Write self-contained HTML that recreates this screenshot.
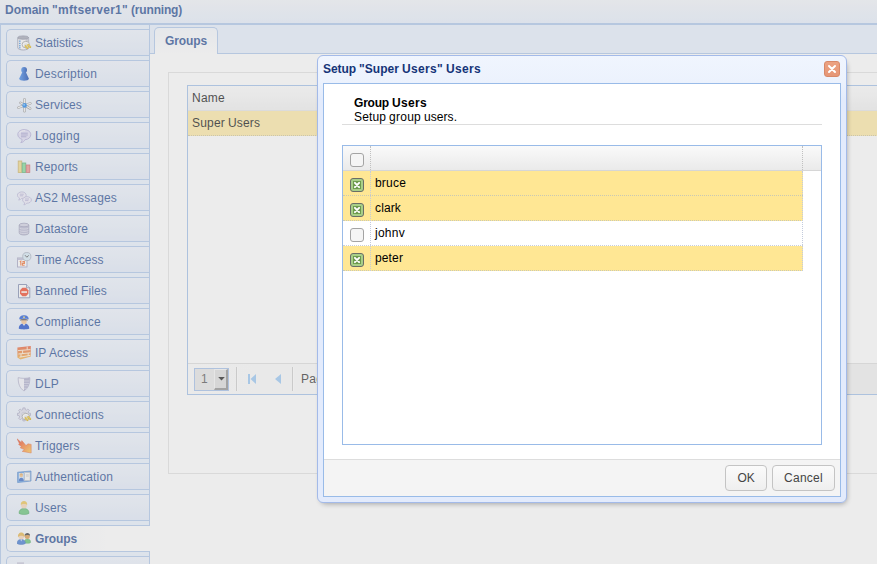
<!DOCTYPE html>
<html>
<head>
<meta charset="utf-8">
<title>Domain "mftserver1" (running)</title>
<style>
html,body{margin:0;padding:0;}
html{overflow:hidden;width:877px;height:564px;}
body{width:877px;height:564px;overflow:hidden;position:relative;background:#fff;font-family:"Liberation Sans",Arial,Helvetica,sans-serif;font-size:12px;color:#000;}
div,span{box-sizing:border-box;}
i{font-style:normal;}
.abs{position:absolute;}
/* header */
#hdr{position:absolute;left:0;top:0;width:877px;height:24px;background:linear-gradient(#f2f5fb,#e5eefc);border-bottom:1px solid #a8c3ea;}
#hdr span{position:absolute;left:5px;top:3px;font-weight:bold;font-size:12px;line-height:14px;color:#15428b;white-space:nowrap;}
/* left strip */
#left{position:absolute;left:0;top:24px;width:150px;height:540px;background:#e7f0fd;border-left:1px solid #a8c3ea;border-right:1px solid #a8c3ea;border-top:1px solid #a8c3ea;}
.lt{position:absolute;left:5px;width:143px;height:27px;border:1px solid #a8c3ea;border-right:none;border-radius:5px 0 0 5px;background:linear-gradient(#edf3fd,#e1eafa);}
.lt span{position:absolute;left:28px;top:6px;line-height:14px;font-size:12px;color:#15428b;white-space:nowrap;}
.lt svg{position:absolute;left:10px;top:5px;width:16px;height:16px;}
.lt.act{background:linear-gradient(90deg,#f1f5fc,#ffffff 70%);width:144px;}
.lt.act span{font-weight:bold;color:#15428b;}
/* main */
#main{position:absolute;left:150px;top:24px;width:727px;height:540px;background:#fff;}
#strip{position:absolute;left:0;top:0;width:727px;height:30px;background:#e5effe;border-top:1px solid #a8c3ea;border-bottom:1px solid #a8c3ea;}
#tab{position:absolute;left:4px;top:2px;width:64px;height:27px;border:1px solid #a8c3ea;border-bottom:none;border-radius:5px 5px 0 0;background:linear-gradient(#f3f7fd,#ffffff);}
#tab span{position:absolute;left:10px;top:6px;font-weight:bold;font-size:12px;line-height:14px;color:#15428b;}
#fs{position:absolute;left:18px;top:48px;width:720px;height:402px;border:1px solid #e0e0e0;background:#fff;}
#grid{position:absolute;left:37px;top:61px;width:700px;height:310px;border:1px solid #99bbe8;background:#fff;}
#ghd{position:absolute;left:0;top:0;width:698px;height:25px;background:linear-gradient(#fdfdfd,#f0f0f0);border-bottom:1px solid #e4e4e4;}
#ghd span{position:absolute;left:4px;top:5px;line-height:14px;}
#grow{position:absolute;left:0;top:25px;width:698px;height:25px;background:#ffe99e;border-bottom:1px dotted #c9c19a;}
#grow span{position:absolute;left:4px;top:5px;line-height:14px;}
#gtb{position:absolute;left:0;top:277px;width:698px;height:31px;border-top:1px solid #dcdcdc;background:linear-gradient(90deg,#fcfcfc 0%,#fafafa 20%,#f1f1f1 90%);}
/* mask */
#mask{position:absolute;left:0;top:0;width:877px;height:564px;background:rgba(204,204,204,0.38);}
/* dialog */
#shadow{position:absolute;left:321px;top:62px;width:525px;height:441px;border-radius:5px;box-shadow:0 0 5px 1px rgba(0,0,0,0.3);}
#dlg{position:absolute;left:317px;top:55px;width:530px;height:448px;border:1px solid #a3bae9;border-radius:6px;background:linear-gradient(#f0f5fe 0px,#ecf2fd 26px,#e3ebfc 44px);}
#dtitle{position:absolute;left:5px;top:6px;font-weight:bold;font-size:12px;line-height:14px;color:#153478;white-space:nowrap;}
#dclose{position:absolute;left:506px;top:5px;width:16px;height:16px;border-radius:3px;background:linear-gradient(#eca282,#e69676);border:1px solid #d88868;}
#dbody{position:absolute;left:5px;top:27px;width:518px;height:414px;border:1px solid #99bbe8;background:#fff;}
#dfoot{position:absolute;left:0;top:375px;width:516px;height:37px;border-top:1px solid #ddd;background:#f4f4f4;}
.btn{position:absolute;top:5px;height:26px;border:1px solid #c4c4c4;border-radius:4px;background:linear-gradient(#fbfbfb,#efefef);color:#444;font-size:12px;line-height:24px;text-align:center;}
#ug{position:absolute;left:18px;top:61px;width:480px;height:300px;border:1px solid #99bbe8;background:#fff;}
#uhd{position:absolute;left:0;top:0;width:478px;height:25px;background:linear-gradient(#fafafa,#eaeaea);border-bottom:1px solid #d6d6d6;}
.ur{position:absolute;left:0;width:460px;height:25px;border-bottom:1px dotted #c8cfdc;}
.ur.sel{background:#ffe794;border-bottom:1px dotted #c9c9b4;}
.ur span{position:absolute;left:32px;top:5px;line-height:14px;font-size:12px;color:#000;}
.cb{position:absolute;left:7px;width:14px;height:14px;border:1px solid #a4a4a4;border-radius:3px;background:#f5f5f5;}
.cb.on{background:#a8cf88;border-color:#6a6e66;}
.cb.on svg{position:absolute;left:-1px;top:-1px;width:14px;height:14px;}
</style>
</head>
<body>
<div id="hdr"><span>Domain<i style="letter-spacing:-0.33px"> </i><i style="letter-spacing:0.27px">&quot;mftserver1&quot;</i><i style="letter-spacing:-0.33px"> </i><i style="letter-spacing:-0.18px">(running)</i></span></div>
<div id="left">
<div class="lt" style="top:4px"><svg viewBox="0 0 16 16"><path d="M.8 2.6 V12.8 C.8 14 3.2 15 6.2 15 S11.6 14 11.6 12.8 V2.6 Z" fill="#f8f8fb" stroke="#9092a8" stroke-width=".9"/><path d="M8.6 3 H11.4 V13 L8.6 14.4 Z" fill="#c8cad6"/><ellipse cx="6.2" cy="2.6" rx="5.4" ry="1.7" fill="#9ea2b2" stroke="#80849a" stroke-width=".8"/><g fill="#3f8fe0"><rect x="2" y="5.5" width="1.6" height="1.3"/><rect x="2" y="7.8" width="1.6" height="1.3"/><rect x="2" y="10.1" width="1.6" height="1.3"/><rect x="2" y="12.2" width="1.6" height="1.2"/></g><ellipse cx="8.8" cy="9.6" rx="3.7" ry="3.3" fill="#fdfdfd" stroke="#9c9c9c" stroke-width=".9"/><ellipse cx="9" cy="9.9" rx="2" ry="1.7" fill="#e2e2e2"/><path d="M8.6 11.2 l1.9 1.9 M11.2 10 l2 2" stroke="#d8a800" stroke-width="2.1" stroke-linecap="round"/><path d="M8.6 11 l1.7 1.7 M11.2 9.8 l1.8 1.8" stroke="#f8e060" stroke-width=".8" stroke-linecap="round"/></svg><span>Statistics</span></div>
<div class="lt" style="top:35px"><svg viewBox="0 0 16 16"><defs><linearGradient id="g1" x1="0" x2="1"><stop offset="0" stop-color="#3c86ec"/><stop offset="1" stop-color="#0038a8"/></linearGradient></defs><path d="M5.4 6 L2.2 12.6 C2 14 4.5 14.8 7 14.8 S12 14 11.8 12.6 L8.8 6 Z" fill="url(#g1)"/><circle cx="7.1" cy="3.9" r="2.9" fill="url(#g1)"/></svg><span><i style="letter-spacing:0.18px">Description</i></span></div>
<div class="lt" style="top:66px"><svg viewBox="0 0 16 16"><g stroke="#8f8f8f" stroke-width="2.4" stroke-linecap="round"><path d="M7.5 2.2 V14.2"/><path d="M1.4 10.6 L13.4 6.4"/><path d="M3.4 5.8 L13.2 11.6"/></g><g stroke="#f4f4f4" stroke-width="1.2" stroke-linecap="round"><path d="M7.5 2.2 V14.2"/><path d="M1.4 10.6 L13.4 6.4"/><path d="M3.4 5.8 L13.2 11.6"/></g><circle cx="7.6" cy="8.4" r="2.3" fill="#0a78e8"/><circle cx="7.1" cy="7.8" r=".9" fill="#7cc4ff"/></svg><span><i style="letter-spacing:0.12px">Services</i></span></div>
<div class="lt" style="top:97px"><svg viewBox="0 0 16 16"><path d="M7.2 1.6 C3.4 1.6 0.8 3.8 0.8 6.6 C0.8 8.8 2.6 10.6 5 11.3 C5.2 12.6 4.6 13.8 3.8 14.6 C5.8 14.4 7.4 13.2 8 11.7 C11.4 11.5 13.8 9.4 13.8 6.6 C13.8 3.8 11 1.6 7.2 1.6 Z" fill="#dddaf4" stroke="#a8a4d4" stroke-width=".9"/><path d="M2.2 5.4 C3 3.4 5.6 2.6 8 2.8" stroke="#f6f5fd" stroke-width="1" fill="none"/><g stroke="#9894c8" stroke-width=".9"><path d="M4 5.2 H10.8"/><path d="M4 7 H10.8"/><path d="M4 8.8 H9.4"/></g></svg><span><i style="letter-spacing:0.33px">Logging</i></span></div>
<div class="lt" style="top:128px"><svg viewBox="0 0 16 16"><rect x="1.2" y="2" width="3.6" height="11.5" fill="#f0d880" stroke="#c8a850" stroke-width=".8"/><rect x="5.2" y="4" width="3.6" height="9.5" fill="#78d890" stroke="#48a868" stroke-width=".8"/><rect x="9.2" y="6" width="3.6" height="7.5" fill="#f08888" stroke="#c85858" stroke-width=".8"/></svg><span><i style="letter-spacing:0.14px">Reports</i></span></div>
<div class="lt" style="top:159px"><svg viewBox="0 0 16 16"><path d="M4.8 1.9000000000000004 c-2.6 0 -4.4 1.5 -4.4 3.3 c0 1.2 .9 2.2 2.1 2.8 c0 .9 -.4 1.6 -.9 2.1 c1.3 -.1 2.4 -.8 2.9 -1.7 c2.7 .1 4.7 -1.4 4.7 -3.2 c0 -1.8 -1.8 -3.3 -4.4 -3.3 Z" fill="#eceaf8" stroke="#b0acd4" stroke-width=".8"/><path d="M2.8 4.2 h4 M2.8 5.8 h3.4" stroke="#aaa6d0" stroke-width=".8"/><path d="M10 6.7 c-2.6 0 -4.4 1.5 -4.4 3.3 c0 1.2 .9 2.2 2.1 2.8 c0 .9 -.4 1.6 -.9 2.1 c1.3 -.1 2.4 -.8 2.9 -1.7 c2.7 .1 4.7 -1.4 4.7 -3.2 c0 -1.8 -1.8 -3.3 -4.4 -3.3 Z" fill="#eceaf8" stroke="#b0acd4" stroke-width=".8"/><path d="M8 9 h4 M8 10.6 h3.4" stroke="#aaa6d0" stroke-width=".8"/></svg><span><i style="letter-spacing:0.11px">AS2</i><i style="letter-spacing:-0.33px"> </i><i style="letter-spacing:0.16px">Messages</i></span></div>
<div class="lt" style="top:190px"><svg viewBox="0 0 16 16"><path d="M2.2 4 V12 C2.2 13.2 4.4 14 7 14 S11.8 13.2 11.8 12 V4 Z" fill="#b4b4d0" stroke="#9494b4" stroke-width=".8"/><ellipse cx="7" cy="4" rx="4.8" ry="1.8" fill="#d0d0e4" stroke="#9494b4" stroke-width=".8"/><g stroke="#d8d8ea" stroke-width=".9" fill="none"><path d="M2.6 7.2 C4 8.3 10 8.3 11.4 7.2"/><path d="M2.6 9.6 C4 10.7 10 10.7 11.4 9.6"/><path d="M2.6 11.8 C4 12.9 10 12.9 11.4 11.8"/></g></svg><span><i style="letter-spacing:0.11px">Datastore</i></span></div>
<div class="lt" style="top:221px"><svg viewBox="0 0 16 16"><rect x=".5" y="6" width="9.5" height="9" fill="#fcfcfe" stroke="#9a9abc" stroke-width=".9"/><rect x=".5" y="6" width="9.5" height="2" fill="#b8b8d4"/><path d="M2.8 10 l1 -.8 v4.2 M5.4 9.6 h2 v1.8 h-2 v1.8 h2.2" stroke="#f06828" stroke-width="1.1" fill="none"/><circle cx="9.8" cy="4.6" r="4.1" fill="#d4e8f6" stroke="#a4acbc" stroke-width=".9"/><path d="M8 3.2 L9.8 5.2 L11.8 3.4" stroke="#444" stroke-width=".9" fill="none"/></svg><span><i style="letter-spacing:0.08px">Time</i><i style="letter-spacing:-0.33px"> </i><i style="letter-spacing:0.05px">Access</i></span></div>
<div class="lt" style="top:252px"><svg viewBox="0 0 16 16"><path d="M1.5 1.5 H9.5 L12.8 4.8 V14.8 H1.5 Z" fill="#fcfcfe" stroke="#6c7aa4" stroke-width=".9"/><path d="M9.5 1.5 V4.8 H12.8" fill="#e4e8f0" stroke="#6c7aa4" stroke-width=".8"/><path d="M5.4 4.8 H9 L11.4 7.2 V10.8 L9 13.2 H5.4 L3 10.8 V7.2 Z" fill="#f03a1c"/><rect x="4.4" y="8.2" width="5.6" height="1.7" fill="#fff0ea"/></svg><span><i style="letter-spacing:0.27px">Banned</i><i style="letter-spacing:-0.33px"> </i><i style="letter-spacing:0.13px">Files</i></span></div>
<div class="lt" style="top:283px"><svg viewBox="0 0 16 16"><path d="M1.8 14.8 C1.6 11.4 3.6 9.4 7 9.4 S12.4 11.4 12.2 14.8 C10 15.6 4 15.6 1.8 14.8 Z" fill="#0a40c8"/><path d="M5.6 10 L7 12 L8.4 10 Z" fill="#dfe8fa"/><circle cx="7" cy="7.6" r="2.7" fill="#f4c08c"/><path d="M2.4 5.4 C2 2.6 4.4 1.2 7 1.2 S12 2.6 11.6 5.4 C10 4.6 4 4.6 2.4 5.4 Z" fill="#1450d8"/><path d="M3.2 5.6 C5 5 9 5 10.8 5.6 V6.5 C9 6 5 6 3.2 6.5 Z" fill="#20202c"/><circle cx="7" cy="3.2" r=".9" fill="#f4d860"/></svg><span><i style="letter-spacing:0.26px">Compliance</i></span></div>
<div class="lt" style="top:314px"><svg viewBox="0 0 16 16"><defs><linearGradient id="g10" x1="0" y1="0" x2="0" y2="1"><stop offset="0" stop-color="#e8522c"/><stop offset="1" stop-color="#f4b03c"/></linearGradient></defs><path d="M.4 2.4 L13.8 1 V11.6 L3.4 14.6 L.4 12.6 Z" fill="url(#g10)"/><g stroke="#fff4e0" stroke-width=".9" fill="none"><path d="M1 5.6 L13.4 4.6"/><path d="M1.4 9 L13.4 7.8"/><path d="M2.4 12.2 L13.4 10.4"/><path d="M10.2 1.6 V4.8"/><path d="M5.6 5.4 V8.6"/><path d="M11.2 8 V10.8"/><path d="M4 9 V12"/></g></svg><span><i style="letter-spacing:-0.17px">IP</i><i style="letter-spacing:-0.33px"> </i><i style="letter-spacing:0.05px">Access</i></span></div>
<div class="lt" style="top:345px"><svg viewBox="0 0 16 16"><path d="M1.2 1.6 C4 2.6 10 2.6 12.8 1.6 C13 8 11 12.4 7 15 C3 12.4 1 8 1.2 1.6 Z" fill="#f2f2fa" stroke="#a4a4c4" stroke-width=".8"/><path d="M7 2.4 C9 2.4 11.4 2.2 12.8 1.6 C13 8 11 12.4 7 15 Z" fill="#a6a6c8"/><g stroke="#d4d4e8" stroke-width=".9"><path d="M7 5 H12.4"/><path d="M7 7.4 H12"/><path d="M7 9.8 H11"/><path d="M7 12.2 H9.6"/></g></svg><span><i style="letter-spacing:0.22px">DLP</i></span></div>
<div class="lt" style="top:376px"><svg viewBox="0 0 16 16"><path d="M13.50 6.27 L13.50 8.53 L11.86 8.57 L11.26 10.01 L12.40 11.20 L10.80 12.80 L9.61 11.66 L8.17 12.26 L8.13 13.90 L5.87 13.90 L5.83 12.26 L4.39 11.66 L3.20 12.80 L1.60 11.20 L2.74 10.01 L2.14 8.57 L0.50 8.53 L0.50 6.27 L2.14 6.23 L2.74 4.79 L1.60 3.60 L3.20 2.00 L4.39 3.14 L5.83 2.54 L5.87 0.90 L8.13 0.90 L8.17 2.54 L9.61 3.14 L10.80 2.00 L12.40 3.60 L11.26 4.79 L11.86 6.23 Z" fill="#dcdcea" stroke="#a2a2c2" stroke-width=".8" stroke-linejoin="round"/><circle cx="7" cy="7.4" r="2.2" fill="#fbfbfe" stroke="#b0b0cc" stroke-width=".7"/><ellipse cx="8.8" cy="9.6" rx="3.7" ry="3.3" fill="#fdfdfd" stroke="#9c9c9c" stroke-width=".9"/><ellipse cx="9" cy="9.9" rx="2" ry="1.7" fill="#e2e2e2"/><path d="M8.6 11.2 l1.9 1.9 M11.2 10 l2 2" stroke="#d8a800" stroke-width="2.1" stroke-linecap="round"/><path d="M8.6 11 l1.7 1.7 M11.2 9.8 l1.8 1.8" stroke="#f8e060" stroke-width=".8" stroke-linecap="round"/></svg><span><i style="letter-spacing:0.21px">Connections</i></span></div>
<div class="lt" style="top:407px"><svg viewBox="0 0 16 16"><defs><linearGradient id="g13" x1="0" y1="0" x2="1" y2="1"><stop offset="0" stop-color="#d82010"/><stop offset=".45" stop-color="#f87028"/><stop offset="1" stop-color="#ffc840"/></linearGradient></defs><path d="M0 .8 L4.2 4.4 L4.8 2.6 L9 7.6 L11 5.8 L14.2 6.4 V15 L5.2 13.4 L7.4 11.6 L3.2 9.8 L4.4 8.4 L1.6 6.4 L2.4 5.4 Z" fill="url(#g13)" stroke="#e05020" stroke-width=".5"/></svg><span><i style="letter-spacing:0.12px">Triggers</i></span></div>
<div class="lt" style="top:438px"><svg viewBox="0 0 16 16"><path d="M.6 3.2 L14 2 V12 L.6 13.6 Z" fill="#5a9ae4" stroke="#3c78c8" stroke-width=".7"/><rect x="7.6" y="3.6" width="5.4" height="7.8" fill="#f4f4f4" stroke="#c0c0c0" stroke-width=".6"/><rect x="9" y="5" width="2.8" height="3" fill="#dcdcdc"/><rect x="1.8" y="4" width="5" height="8" fill="#cfe2f8"/><circle cx="4.3" cy="6.4" r="1.7" fill="#f0b878"/><path d="M1.8 12 C1.8 9.6 3 8.8 4.3 8.8 S6.8 9.6 6.8 12 Z" fill="#2c62c4"/><path d="M2.6 5.6 C3 4.2 5.6 4.2 6 5.6 Z" fill="#d89030"/></svg><span><i style="letter-spacing:0.14px">Authentication</i></span></div>
<div class="lt" style="top:469px"><svg viewBox="0 0 16 16"><path d="M2 13.4 C2 10 4 8.6 7 8.6 S12 10 12 13.4 C10 14.8 4 14.8 2 13.4 Z" fill="#5cc070" stroke="#3c9c54" stroke-width=".6"/><circle cx="7" cy="5.4" r="2.9" fill="#f6d4b4"/><path d="M3.8 5.2 C3.4 2.4 5.2 1 7 1 S10.6 2.4 10.2 5.2 C9.4 3.6 4.6 3.6 3.8 5.2 Z" fill="#ecc048"/></svg><span><i style="letter-spacing:0.13px">Users</i></span></div>
<div class="lt act" style="top:500px"><svg viewBox="0 0 16 16"><path d="M7.4 11.4 C7.4 9 8.6 8 10.4 8 S13.6 9 13.6 11.4 C12.4 12.6 8.6 12.6 7.4 11.4 Z" fill="#58c068" stroke="#3c9c54" stroke-width=".5"/><circle cx="10.3" cy="5.6" r="2.5" fill="#d89440"/><path d="M7.6 5.2 C7.4 2.8 9 2 10.4 2 S13.2 2.8 13 5 C12.2 3.8 8.6 3.8 7.6 5.2 Z" fill="#2c2c2c"/><path d="M0 12.4 C0 9.6 1.6 8.4 4.2 8.4 S8.4 9.6 8.4 12.4 C6.8 13.8 1.6 13.8 0 12.4 Z" fill="#3470d0" stroke="#2458b0" stroke-width=".5"/><path d="M3.4 8.6 L4.2 10.4 L5 8.6 Z" fill="#e8f0fc"/><circle cx="4.3" cy="5.6" r="2.7" fill="#f6d0b0"/><path d="M1 6.4 C.6 3 2.6 1.6 4.3 1.6 S8 3 7.6 6.4 C7 4.2 1.6 4.2 1 6.4 Z" fill="#e4b040"/></svg><span><i style="letter-spacing:-0.11px">Groups</i></span></div>
<div class="lt" style="top:531px"><svg viewBox="0 0 16 16"><rect x="0" y=".3" width="7" height="3" fill="#c4c4d8"/></svg></div>
</div>
<div id="main">
  <div id="strip"><div id="tab"><span><i style="letter-spacing:-0.11px">Groups</i></span></div></div>
  <div id="fs"></div>
  <div id="grid">
    <div id="ghd"><span><i style="letter-spacing:0.25px">Name</i></span></div>
    <div id="grow"><span><i style="letter-spacing:0.20px">Super</i><i style="letter-spacing:-0.33px"> </i><i style="letter-spacing:0.13px">Users</i></span></div>
    <div id="gtb">
      <div class="abs" style="left:6px;top:4px;width:35px;height:23px;border:1px solid #9dbce8;background:#e6e6e6;"></div>
      <div class="abs" style="left:13px;top:8px;line-height:14px;color:#4a4a4a;">1</div>
      <div class="abs" style="left:26px;top:5px;width:14px;height:21px;background:#dcdcdc;border-top:1px solid #f6f6f6;border-left:1px solid #f6f6f6;border-right:2px solid #8a8a8a;border-bottom:2px solid #8a8a8a;"></div>
      <svg class="abs" style="left:30px;top:13px" width="7" height="4" viewBox="0 0 7 4"><path d="M.2 0 H6.8 L3.5 3.6 Z" fill="#111"/></svg>
      <div class="abs" style="left:48px;top:3px;width:1px;height:24px;background:#c8c8c8;"></div>
      <div class="abs" style="left:49px;top:3px;width:1px;height:24px;background:#fff;"></div>
      <svg class="abs" style="left:60px;top:10px" width="8" height="10" viewBox="0 0 8 10"><rect x="0" y="0" width="2" height="10" fill="#92c4f4"/><path d="M8 0 V10 L2.5 5 Z" fill="#92c4f4"/></svg>
      <svg class="abs" style="left:87px;top:10px" width="6" height="10" viewBox="0 0 6 10"><path d="M6 0 V10 L0 5 Z" fill="#92c4f4"/></svg>
      <div class="abs" style="left:104px;top:3px;width:1px;height:24px;background:#c8c8c8;"></div>
      <div class="abs" style="left:105px;top:3px;width:1px;height:24px;background:#fff;"></div>
      <div class="abs" style="left:113px;top:8px;line-height:14px;color:#222;white-space:nowrap;"><i style="letter-spacing:0.24px">Page</i></div>
    </div>
  </div>
</div>
<div id="mask"></div>
<div id="shadow"></div>
<div id="dlg">
  <div id="dtitle"><i style="letter-spacing:-0.07px">Setup</i><i style="letter-spacing:-0.33px"> </i><i style="letter-spacing:0.05px">&quot;Super</i><i style="letter-spacing:-0.33px"> </i><i style="letter-spacing:0.33px">Users&quot;</i><i style="letter-spacing:-0.33px"> </i><i style="letter-spacing:0.33px">Users</i></div>
  <div id="dclose"><svg viewBox="0 0 16 16" width="16" height="16" style="position:absolute;left:-1px;top:-1px"><path d="M5 5 L11 11 M11 5 L5 11" stroke="#fff" stroke-width="2" stroke-linecap="round" fill="none"/></svg></div>
  <div id="dbody">
    <div class="abs" style="left:30px;top:12px;font-weight:bold;line-height:14px;"><i style="letter-spacing:-0.20px">Group</i><i style="letter-spacing:-0.33px"> </i><i style="letter-spacing:0.33px">Users</i></div>
    <div class="abs" style="left:30px;top:26px;line-height:14px;"><i style="letter-spacing:0.13px">Setup</i><i style="letter-spacing:-0.33px"> </i><i style="letter-spacing:0.26px">group</i><i style="letter-spacing:-0.33px"> </i><i style="letter-spacing:0.05px">users.</i></div>
    <div class="abs" style="left:18px;top:40px;width:480px;height:1px;background:#ddd;"></div>
    <div id="ug">
      <div id="uhd"><div class="cb" style="top:7px"></div></div>
      <div class="ur sel" style="top:25px"><div class="cb on" style="top:7px"><svg viewBox="0 0 14 14"><rect x="3" y="3" width="8" height="8" fill="#6c9a4c"/><path d="M4.9 4.9 L9.1 9.1 M9.1 4.9 L4.9 9.1" stroke="#fff" stroke-width="2" stroke-linecap="round" fill="none"/></svg></div><span><i style="letter-spacing:0.20px">bruce</i></span></div>
      <div class="ur sel" style="top:50px"><div class="cb on" style="top:7px"><svg viewBox="0 0 14 14"><rect x="3" y="3" width="8" height="8" fill="#6c9a4c"/><path d="M4.9 4.9 L9.1 9.1 M9.1 4.9 L4.9 9.1" stroke="#fff" stroke-width="2" stroke-linecap="round" fill="none"/></svg></div><span><i style="letter-spacing:0.13px">clark</i></span></div>
      <div class="ur" style="top:75px"><div class="cb" style="top:7px"></div><span><i style="letter-spacing:0.26px">johnv</i></span></div>
      <div class="ur sel" style="top:100px"><div class="cb on" style="top:7px"><svg viewBox="0 0 14 14"><rect x="3" y="3" width="8" height="8" fill="#6c9a4c"/><path d="M4.9 4.9 L9.1 9.1 M9.1 4.9 L4.9 9.1" stroke="#fff" stroke-width="2" stroke-linecap="round" fill="none"/></svg></div><span><i style="letter-spacing:0.13px">peter</i></span></div>
    </div>
    <div class="abs" style="left:46px;top:87px;width:0;height:100px;border-left:1px dotted #c3cbdc;"></div>
    <div class="abs" style="left:478px;top:87px;width:0;height:100px;border-left:1px dotted #c3cbdc;"></div>
    <div class="abs" style="left:46px;top:62px;width:0;height:24px;border-left:1px dotted #c0c0c0;"></div>
    <div class="abs" style="left:478px;top:62px;width:0;height:24px;border-left:1px dotted #c0c0c0;"></div>
    <div id="dfoot">
      <div class="btn" style="left:401px;width:42px;"><i style="letter-spacing:-0.17px">OK</i></div>
      <div class="btn" style="left:448px;width:63px;"><i style="letter-spacing:0.27px">Cancel</i></div>
    </div>
  </div>
</div>
</body>
</html>
